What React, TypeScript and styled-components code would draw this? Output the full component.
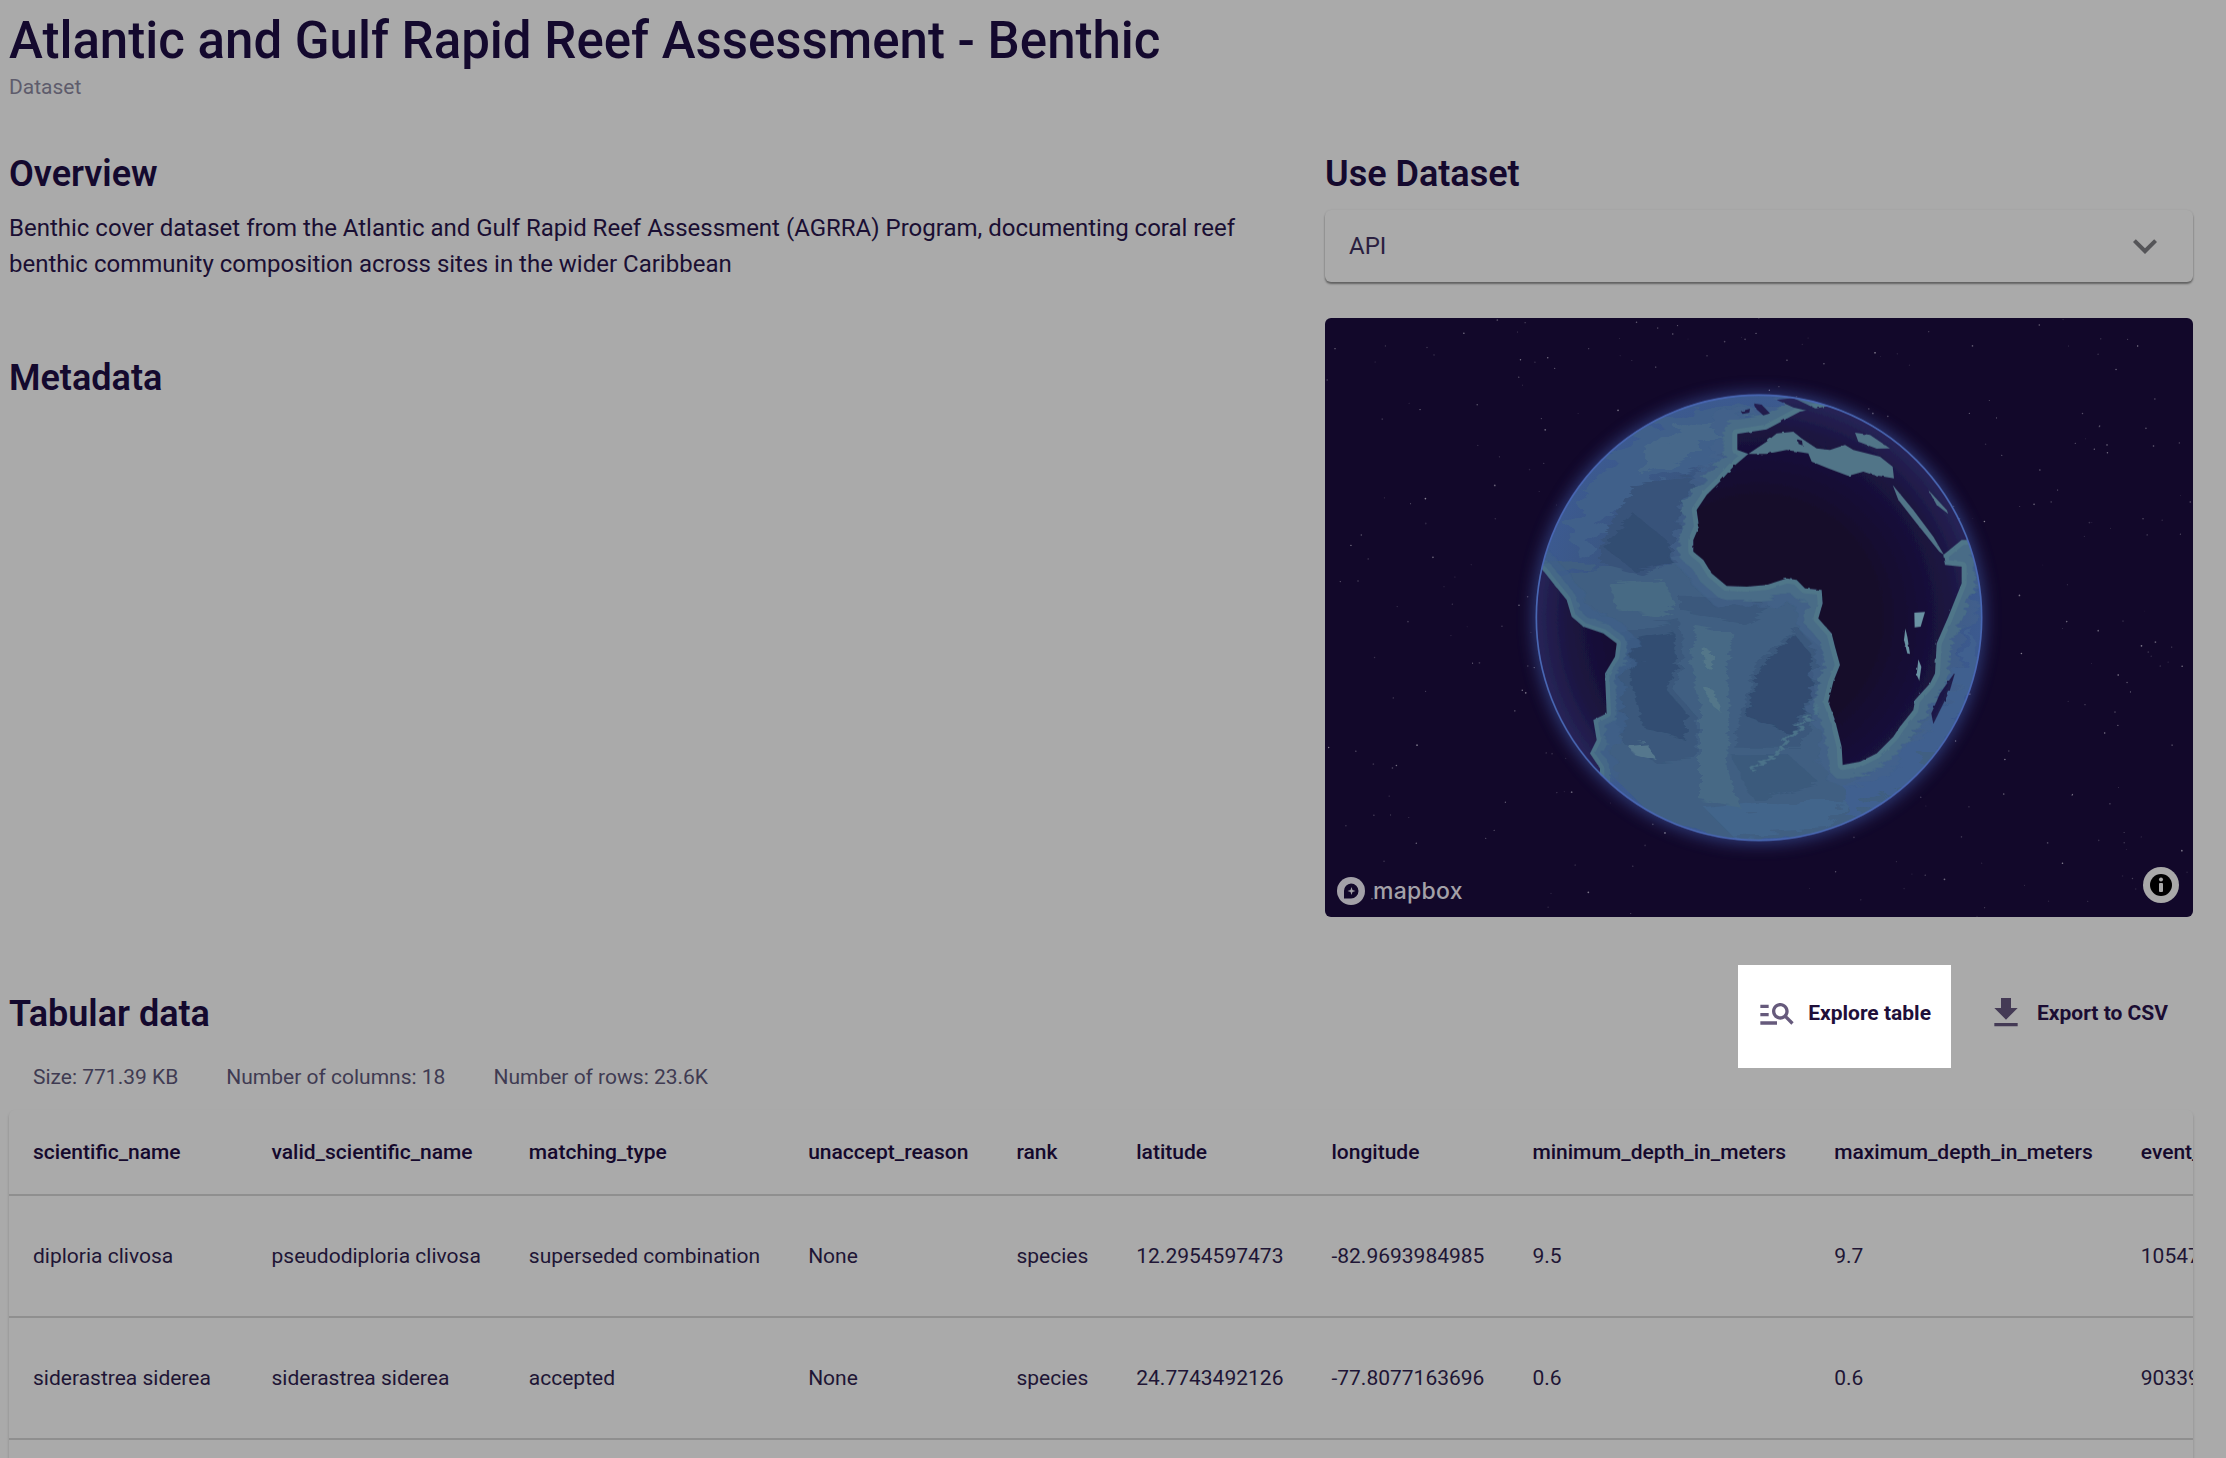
import React from "react";
import styled, { createGlobalStyle } from "styled-components";

const Global = createGlobalStyle`
  html, body { margin: 0; padding: 0; background: #aaaaaa; }
  * { box-sizing: border-box; }
`;

const Page = styled.div`
  height: 100vh;
  overflow: hidden;
  padding: 13px 33px 0 9px;
  background: #aaaaaa;
  font-family: Roboto, "Liberation Sans", sans-serif;
  color: #14092e;
`;
const Title = styled.h1`
  margin: 0;
  font-size: 51px;
  line-height: 56px;
  font-weight: 500;
  letter-spacing: 0;
`;
const Kind = styled.div`
  margin-top: 4px;
  font-size: 21px;
  line-height: 28px;
  color: #5e5c6c;
`;
const Columns = styled.div`
  display: grid;
  grid-template-columns: 1fr 868px;
  column-gap: 60px;
  margin-top: 51px;
`;
const Left = styled.section`
  display: flex;
  flex-direction: column;
`;
const Right = styled.section`
  display: flex;
  flex-direction: column;
`;
const Heading = styled.h2`
  margin: 0;
  font-size: 36px;
  line-height: 44px;
  font-weight: 600;
`;
const SpacedHeading = styled(Heading)`
  margin-top: 74px;
`;
const Description = styled.p`
  margin: 14px 0 0;
  font-size: 24px;
  line-height: 36px;
  color: #1a0f33;
`;
const Select = styled.div`
  margin-top: 14px;
  height: 72px;
  padding: 0 24px;
  display: flex;
  align-items: center;
  justify-content: space-between;
  font-size: 24px;
  color: #2a2040;
  border-radius: 6px;
  background: #aaaaaa;
  box-shadow: 0 2px 2px rgba(0, 0, 0, 0.42), 0 0 2px rgba(0, 0, 0, 0.08);
`;
const Chevron = styled.svg`
  width: 48px;
  height: 48px;
  fill: #555558;
`;
const MapBox = styled.div`
  position: relative;
  margin-top: 36px;
  height: 599px;
  border-radius: 6px;
  overflow: hidden;
  background: #12082a;
`;
const MapArt = styled.svg`
  display: block;
  width: 100%;
  height: 100%;
`;
const Logo = styled.div`
  position: absolute;
  left: 12px;
  bottom: 12px;
  display: flex;
  align-items: center;
  gap: 8px;
  color: #a3a1a8;
  font-family: Inter, Lato, sans-serif;
  font-size: 23px;
  font-weight: 500;
  line-height: 28px;
  letter-spacing: 0.3px;
`;
const LogoMark = styled.svg`
  width: 28px;
  height: 28px;
`;
const InfoBadge = styled.svg`
  position: absolute;
  right: 14px;
  bottom: 14px;
  width: 36px;
  height: 36px;
`;
const TabularHead = styled.div`
  display: flex;
  align-items: center;
  justify-content: space-between;
  margin: 48px 5px -5px 0;
`;
const TabularTitle = styled(Heading)`
  margin-top: -5px;
`;
const Actions = styled.div`
  display: flex;
  gap: 16px;
`;
const ActionButton = styled.button<{ $active?: boolean }>`
  display: flex;
  align-items: flex-start;
  gap: 11px;
  height: 103px;
  padding: 28px 20px 0 19px;
  border: 0;
  background: ${(p) => (p.$active ? "#ffffff" : "transparent")};
  color: ${(p) => (p.$active ? "#1f0f3a" : "#1b0d33")};
  font-family: inherit;
  font-size: 21px;
  font-weight: 700;
  line-height: 40px;
`;
const ActionIcon = styled.svg<{ $active?: boolean }>`
  width: 40px;
  height: 40px;
  fill: ${(p) => (p.$active ? "#665a7c" : "#443a55")};
`;
const Stats = styled.div`
  display: flex;
  gap: 48px;
  padding-left: 24px;
  font-size: 21px;
  line-height: 28px;
  color: #3f3b52;
`;
const TableFrame = styled.div`
  margin-top: 19px;
  overflow: hidden;
  border-radius: 6px 6px 0 0;
  box-shadow: 0 2px 3px rgba(0, 0, 0, 0.2);
`;
const Table = styled.table`
  border-collapse: collapse;
  width: max-content;
  font-size: 21px;
`;
const HeadCell = styled.th`
  height: 85px;
  padding: 0 24px;
  text-align: left;
  white-space: nowrap;
  font-weight: 500;
  color: #15092d;
  border-bottom: 2px solid #8f8f8f;
  &:first-child {
    min-width: 238.5px;
  }
`;
const Cell = styled.td`
  height: 122px;
  padding: 0 24px;
  white-space: nowrap;
  color: #201535;
  border-bottom: 2px solid #8f8f8f;
`;

const columns = [
  "scientific_name", "valid_scientific_name", "matching_type", "unaccept_reason", "rank",
  "latitude", "longitude", "minimum_depth_in_meters", "maximum_depth_in_meters", "event_id",
];
const rows = [
  ["diploria clivosa", "pseudodiploria clivosa", "superseded combination", "None", "species", "12.2954597473", "-82.9693984985", "9.5", "9.7", "1054712"],
  ["siderastrea siderea", "siderastrea siderea", "accepted", "None", "species", "24.7743492126", "-77.8077163696", "0.6", "0.6", "9033912"],
  ["", "", "", "", "", "", "", "", "", ""],
];

const stars = (() => {
  let s = 12345;
  const r = () => ((s = (s * 16807) % 2147483647) / 2147483647);
  return Array.from({ length: 330 }, () => ({ x: r() * 868, y: r() * 599, o: 0.1 + r() * 0.4, d: 0.4 + r() * 0.5 }));
})();

const LAND =
  "M745 252 L700 290 L660 335 L620 375 L590 420 L597 470 L580 510 L580 545 L610 570 L635 610 L680 648 L740 650 L800 645 L860 625 L890 630 L915 655 L965 660 L968 700 L955 745 L995 790 L1005 830 L1020 885 L1000 935 L985 995 L1005 1050 L1025 1130 L1028 1185 L1080 1175 L1130 1150 L1180 1100 L1200 1070 L1240 1020 L1245 990 L1290 940 L1305 910 L1310 820 L1345 740 L1385 640 L1385 590 L1335 585 L1330 555 L1385 510 L1600 510 L1600 -50 L1000 -50 L1000 105 L900 125 L800 178 L712 192 L712 240 Z";
const WEST_LAND =
  "M128 600 L160 640 L200 690 L215 740 L250 770 L310 790 L350 820 L345 860 L315 910 L320 1030 L280 1050 L290 1110 L270 1150 L300 1195 L300 1300 L0 1300 L0 600 Z";
const EAST_ISLE = "M1366 905 L1350 960 L1300 1062 L1294 1030 L1320 970 Z";
const BRITAIN = "M722 124 L750 116 L748 128 L728 132 Z";
const IRELAND = "M762 100 L785 104 L810 130 L790 136 L770 118 Z";
const NORDIC = "M830 90 L880 84 L960 122 L920 122 L880 112 Z";

export default function App() {
  return (
    <Page>
      <Global />
      <Title>Atlantic and Gulf Rapid Reef Assessment - Benthic</Title>
      <Kind>Dataset</Kind>
      <Columns>
        <Left>
          <Heading>Overview</Heading>
          <Description>
            Benthic cover dataset from the Atlantic and Gulf Rapid Reef Assessment (AGRRA) Program, documenting coral reef
            benthic community composition across sites in the wider Caribbean
          </Description>
          <SpacedHeading>Metadata</SpacedHeading>
        </Left>
        <Right>
          <Heading>Use Dataset</Heading>
          <Select>
            API
            <Chevron viewBox="0 0 24 24"><path d="M16.59 8.59 12 13.17 7.41 8.59 6 10l6 6 6-6z" /></Chevron>
          </Select>
          <MapBox>
            <MapArt viewBox="0 0 868 599">
              <defs>
                <radialGradient id="landGrad" cx="777" cy="743" r="670" gradientUnits="userSpaceOnUse">
                  <stop offset="0.55" stopColor="#13092c" />
                  <stop offset="0.85" stopColor="#1b1440" />
                  <stop offset="1" stopColor="#272558" />
                </radialGradient>
                <radialGradient id="oceanGrad" cx="777" cy="743" r="670" gradientUnits="userSpaceOnUse">
                  <stop offset="0.7" stopColor="#3a5680" />
                  <stop offset="1" stopColor="#3c5a90" />
                </radialGradient>
                <clipPath id="globeClip"><circle cx="777" cy="743" r="668" /></clipPath>
                <filter id="glow" x="-20%" y="-20%" width="140%" height="140%"><feGaussianBlur stdDeviation="8" /></filter>
                <filter id="soft"><feGaussianBlur stdDeviation="1.2" /></filter>
                <filter id="rough" x="-5%" y="-5%" width="110%" height="110%">
                  <feTurbulence type="fractalNoise" baseFrequency="0.006 0.07" numOctaves="3" seed="4" />
                  <feDisplacementMap in="SourceGraphic" scale="34" />
                </filter>
                <filter id="broad" x="-10%" y="-10%" width="120%" height="120%">
                  <feTurbulence type="fractalNoise" baseFrequency="0.01 0.03" numOctaves="3" seed="21" />
                  <feDisplacementMap in="SourceGraphic" scale="90" />
                </filter>
                <filter id="coast" x="-5%" y="-5%" width="110%" height="110%">
                  <feTurbulence type="fractalNoise" baseFrequency="0.05" numOctaves="2" seed="9" />
                  <feDisplacementMap in="SourceGraphic" scale="7" />
                </filter>
              </defs>
              {stars.map((st, i) => (
                <circle key={i} cx={st.x} cy={st.y} r={st.d} fill="#fff" opacity={st.o} />
              ))}
              <circle cx="434" cy="300" r="226" fill="#3f5ca8" opacity="0.6" filter="url(#glow)" />
              <g transform="translate(175 52) scale(0.33333)">
                <g clipPath="url(#globeClip)">
                  <rect x="0" y="0" width="1560" height="1470" fill="url(#oceanGrad)" />
                  <g filter="url(#broad)">
                    <path d="M430 170 L600 120 L760 110 L790 180 L700 250 L600 300 L480 340 L380 400 L300 470 L250 580 L200 480 L290 320 Z" fill="#40608a" />
                    <path d="M440 250 L560 160 L660 170 L560 270 L430 330 Z" fill="#46688a" />
                    <path d="M130 600 L320 590 L560 570 L650 650 L850 630 L950 690 L1010 850 L990 1010 L1010 1100 L1060 1230 L1180 1150 L1320 1000 L1340 1150 L1100 1400 L700 1420 L460 1340 L300 1180 L290 1020 L330 900 L340 800 L240 740 Z" fill="#3f5f82" />
                    <path d="M1240 1100 L1330 1000 L1420 780 L1450 900 L1380 1060 L1220 1250 L1040 1340 L1030 1240 Z" fill="#40608f" />
                    <path d="M620 1320 L820 1300 L1040 1290 L990 1380 L700 1400 Z" fill="#43658b" />
                  </g>
                  <g filter="url(#rough)">
                    <path d="M300 520 L400 350 L560 320 L630 340 L570 410 L545 560 L420 610 L300 580 Z" fill="#38537a" />
                    <path d="M310 530 L400 430 L500 510 L525 570 L400 600 Z" fill="#324d72" />
                    <path d="M330 640 L490 630 L530 710 L470 740 L350 720 Z" fill="#476a84" />
                    <path d="M350 790 L540 750 L550 860 L520 960 L590 1040 L590 1170 L470 1180 L370 1120 L330 980 Z" fill="#3a587b" />
                    <path d="M380 815 L520 785 L530 880 L500 960 L560 1030 L555 1110 L430 1070 L400 960 Z" fill="#324e72" />
                    <path d="M540 680 L800 680 L810 720 L730 760 L540 720 Z" fill="#3a587b" />
                    <path d="M730 1020 L770 880 L890 770 L960 830 L980 960 L900 1130 L700 1130 Z" fill="#3a587b" />
                    <path d="M780 900 L880 790 L930 850 L945 970 L870 1090 L740 1040 L760 960 Z" fill="#304c70" />
                    <path d="M690 1150 L860 1150 L960 1240 L760 1290 Z" fill="#3a5a7c" />
                    <path d="M590 770 L700 790 L680 900 L690 1020 L680 1190 L720 1310 L600 1290 L600 1020 L570 880 Z" fill="#466985" />
                    <path d="M610 830 L640 850 L635 900 L615 890 Z" fill="#527689" />
                    <path d="M610 950 L640 960 L665 1030 L630 1000 Z" fill="#527689" />
                    <path d="M385 1125 L440 1120 L470 1170 L400 1150 Z" fill="#54778d" />
                  </g>
                  <g filter="url(#broad)" fill="none" strokeLinejoin="round">
                    <path d={LAND} stroke="#42638a" strokeWidth="130" opacity="0.6" />
                    <path d={WEST_LAND} stroke="#3f6089" strokeWidth="110" opacity="0.7" />
                  </g>
                  <g filter="url(#rough)" fill="none" strokeLinejoin="round">
                    <path d={LAND} stroke="#486c87" strokeWidth="84" />
                    <path d={WEST_LAND} stroke="#456887" strokeWidth="60" />
                    <path d="M960 1010 L880 1085 L820 1160 L750 1195" stroke="#4c7289" strokeWidth="10" />
                  </g>
                  <g filter="url(#coast)" fill="none" strokeLinejoin="round">
                    <path d={LAND} stroke="#507689" strokeWidth="30" />
                    <path d={WEST_LAND} stroke="#4c7288" strokeWidth="26" />
                  </g>
                  <g filter="url(#coast)">
                    <path d={LAND} fill="url(#landGrad)" />
                    <path d={WEST_LAND} fill="url(#landGrad)" />
                    <path d={EAST_ISLE} fill="url(#landGrad)" />
                    <path d={BRITAIN} fill="url(#landGrad)" />
                    <path d={IRELAND} fill="url(#landGrad)" />
                    <path d={NORDIC} fill="url(#landGrad)" />
                    <path d="M745 252 L800 215 L830 190 L880 185 L905 205 L950 235 L990 240 L1035 225 L1060 240 L1140 260 L1178 290 L1182 325 L1120 315 L1090 305 L1045 318 L985 295 L935 275 L925 250 L860 240 L800 252 Z" fill="#517488" />
                    <path d="M920 178 L985 225 L975 238 L930 198 Z" fill="#1b1440" />
                    <path d="M893 208 L906 212 L908 226 L896 222 Z" fill="#1b1440" />
                    <path d="M1065 188 L1110 195 L1170 235 L1130 236 L1075 215 Z" fill="#517488" />
                    <path d="M1178 345 L1240 420 L1300 500 L1332 555 L1318 545 L1250 460 L1195 390 Z" fill="#517488" />
                    <path d="M1285 360 L1340 420 L1345 432 L1310 405 Z" fill="#517488" />
                    <path d="M1243 728 L1275 726 L1262 770 L1244 772 Z" fill="#6a93a3" />
                    <path d="M1216 775 L1222 800 L1230 852 L1222 850 L1212 810 Z" fill="#6a93a3" />
                    <path d="M1255 868 L1264 890 L1258 932 L1250 915 Z" fill="#6a93a3" />
                  </g>
                </g>
                <circle cx="777" cy="743" r="668" fill="none" stroke="#4a68b4" strokeWidth="5" filter="url(#soft)" />
              </g>
            </MapArt>
            <Logo>
              <LogoMark viewBox="0 0 28 28">
                <circle cx="14" cy="14" r="14" fill="#a3a1a8" />
                <path d="M14 6.5a7.5 7.5 0 0 1 0 15H7v-7.5A7.5 7.5 0 0 1 14 6.5z" fill="#12082a" />
                <path d="M14.5 10l1 3 3 1-3 1-1 3-1-3-3-1 3-1z" fill="#a3a1a8" />
              </LogoMark>
              mapbox
            </Logo>
            <InfoBadge viewBox="0 0 36 36">
              <circle cx="18" cy="18" r="18" fill="#a9a9a9" />
              <circle cx="18" cy="18" r="11" fill="#000" />
              <circle cx="18" cy="12.5" r="2" fill="#a9a9a9" />
              <rect x="16" y="16" width="4" height="9" rx="1" fill="#a9a9a9" />
            </InfoBadge>
          </MapBox>
        </Right>
      </Columns>
      <TabularHead>
        <TabularTitle>Tabular data</TabularTitle>
        <Actions>
          <ActionButton $active>
            <ActionIcon $active viewBox="0 0 24 24">
              <path d="M7 9H2V7h5v2zm0 3H2v2h5v-2zm13.59 7-3.83-3.83c-.8.52-1.74.83-2.76.83-2.76 0-5-2.24-5-5s2.24-5 5-5 5 2.24 5 5c0 1.02-.31 1.96-.83 2.75L22 17.59 20.59 19zM17 11c0-1.65-1.35-3-3-3s-3 1.35-3 3 1.35 3 3 3 3-1.35 3-3zM2 19h10v-2H2v2z" />
            </ActionIcon>
            Explore table
          </ActionButton>
          <ActionButton>
            <ActionIcon viewBox="0 0 24 24">
              <path d="M5 20h14v-2H5v2zM19 9h-4V3H9v6H5l7 7 7-7z" />
            </ActionIcon>
            Export to CSV
          </ActionButton>
        </Actions>
      </TabularHead>
      <Stats>
        <span>Size: 771.39 KB</span>
        <span>Number of columns: 18</span>
        <span>Number of rows: 23.6K</span>
      </Stats>
      <TableFrame>
        <Table>
          <thead>
            <tr>{columns.map((c) => <HeadCell key={c}>{c}</HeadCell>)}</tr>
          </thead>
          <tbody>
            {rows.map((r, i) => (
              <tr key={i}>{r.map((v, j) => <Cell key={j}>{v}</Cell>)}</tr>
            ))}
          </tbody>
        </Table>
      </TableFrame>
    </Page>
  );
}
